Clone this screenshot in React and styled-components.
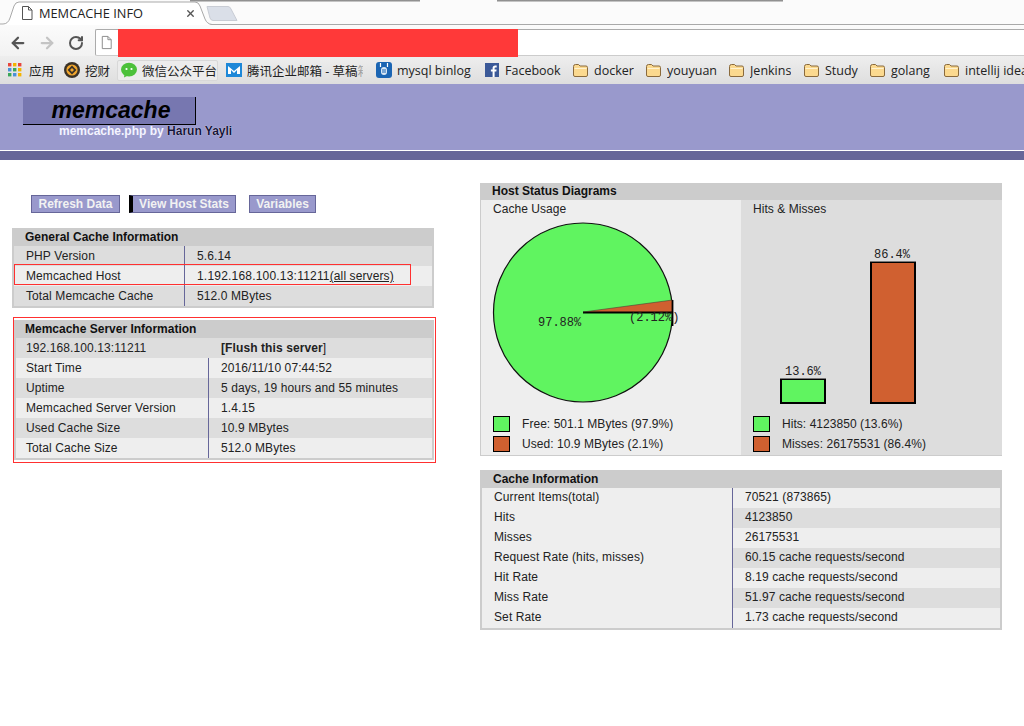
import React from "react";
import styled, { createGlobalStyle } from "styled-components";
import { ArrowLeft, ArrowRight, RotateCw, X } from "lucide-react";

const GlobalStyle = createGlobalStyle`
  html, body {
    margin: 0;
    padding: 0;
    background: #fff;
    overflow: hidden;
  }
  #root {
    width: 1024px;
    height: 726px;
    overflow: hidden;
    font-family: "Liberation Sans", Arial, sans-serif;
  }
`;

const chromeFont = `"Open Sans", "Noto Sans CJK SC", sans-serif`;

const FileIcon = ({ size = 16, color = "#555" }) => (
  <svg width={size} height={size} viewBox="0 0 16 16" fill="#fff" stroke={color} strokeWidth="1">
    <path d="M3.5 1.5h6l3.5 3.5v9.5h-9.500z" />
    <path d="M9.5 1.5v3.5h3.5" fill="none" />
  </svg>
);

const AppsIcon = () => {
  const colors = ["#e8453c", "#f4b400", "#e8453c", "#4a90d9", "#3aa757", "#f4b400", "#3aa757", "#4a90d9", "#f4b400"];
  return (
    <svg width="14" height="14" viewBox="0 0 14 14">
      {colors.map((c, i) => (
        <rect key={i} x={(i % 3) * 5} y={Math.floor(i / 3) * 5} width="3.4" height="3.4" fill={c} />
      ))}
    </svg>
  );
};

const WacaiIcon = () => (
  <svg width="16" height="16" viewBox="0 0 16 16">
    <circle cx="8" cy="8" r="8" fill="#3a3228" />
    <circle cx="8" cy="8" r="5.6" fill="#f2a72e" />
    <path d="M8 3.6 12.4 8 8 12.4 3.6 8z" fill="#3a3228" />
    <path d="M8 6 10 8 8 10 6 8z" fill="#f2a72e" />
  </svg>
);

const WechatIcon = () => (
  <svg width="16" height="16" viewBox="0 0 16 16">
    <ellipse cx="8" cy="7.6" rx="8" ry="6.8" fill="#4cc13a" />
    <path d="M3.5 12 3 15.5 7 13.5z" fill="#4cc13a" />
    <circle cx="5.5" cy="7" r="1.1" fill="#fff" />
    <circle cx="10.5" cy="7" r="1.1" fill="#fff" />
  </svg>
);

const MailIcon = () => (
  <svg width="16" height="14" viewBox="0 0 16 14">
    <rect width="16" height="14" fill="#1e88d8" />
    <path d="M2 3 8 8 14 3v8h-3V7L8 10 5 7v4H2z" fill="#fff" />
  </svg>
);

const MysqlIcon = () => (
  <svg width="16" height="16" viewBox="0 0 16 16">
    <rect width="16" height="16" rx="3" fill="#1b65b3" />
    <path d="M4.5 1v4M11.5 1v4" stroke="#fff" strokeWidth="1.2" />
    <rect x="5" y="5" width="6" height="8" rx="3" fill="#dbe8f4" />
    <path d="M6 8h4M6 10h4" stroke="#1b65b3" />
  </svg>
);

const FacebookIcon = () => (
  <svg width="14" height="14" viewBox="0 0 14 14">
    <rect width="14" height="14" fill="#3b5998" />
    <path d="M9.6 14V8.6h1.7l.3-2H9.6V5.4c0-.6.2-1 1-1h1.1V2.6c-.3 0-.9-.1-1.6-.1-1.500 0-2.500.9-2.500 2.600v1.500H5.900v2h1.700V14z" fill="#fff" />
  </svg>
);

const FolderIcon = () => (
  <svg width="15" height="13" viewBox="0 0 15 13">
    <path d="M.5 2.500q0-2 2-2h3l1.500 1.500h6q1.500 0 1.500 1.500v7.500q0 1.500-1.500 1.500h-11q-1.500 0-1.500-1.500z" fill="#fbd98f" stroke="#8a6a3c" />
    <path d="M1.500 4.500h12" stroke="#fff2cf" />
  </svg>
);

const TabStrip = styled.div`
  position: relative;
  height: 25px;
  background: #fbfbfb;
  border-bottom: 1px solid #a9a9a9;
  box-sizing: border-box;
`;

const WindowShadow = styled.div`
  position: absolute;
  top: 0;
  left: ${(p) => p.$left}px;
  width: ${(p) => p.$width}px;
  height: 2px;
  background: linear-gradient(#777, #ddd);
`;

const TabShape = styled.svg`
  position: absolute;
  left: 0;
  top: 0;
`;

const Tab = styled.div`
  position: absolute;
  left: 19px;
  top: 4px;
  width: 177px;
  height: 18px;
  display: flex;
  align-items: center;
  gap: 4px;
  font: 12.8px ${chromeFont};
  color: #222;
`;

const TabTitle = styled.span`
  flex: 1;
  white-space: nowrap;
`;

const NewTab = styled.svg`
  position: absolute;
  left: 206px;
  top: 5px;
`;

const Toolbar = styled.div`
  height: 31px;
  background: linear-gradient(#fbfbfb, #f2f2f2);
  display: flex;
  align-items: flex-start;
  padding: 4px 0 0 3px;
  box-sizing: border-box;
`;

const NavButton = styled.div`
  width: 29px;
  height: 27px;
  display: flex;
  align-items: center;
  justify-content: center;
  color: ${(p) => (p.$disabled ? "#c4c4c4" : "#555")};
`;

const Omnibox = styled.div`
  flex: 1;
  height: 27px;
  margin-left: 5px;
  background: #fff;
  border: 1px solid #ababab;
  border-right: 0;
  border-bottom-color: #ccc;
  border-radius: 2px 0 0 2px;
  box-sizing: border-box;
  display: flex;
  align-items: center;
  padding-left: 3px;
  gap: 4px;
`;

const Redaction = styled.div`
  width: 400px;
  height: 28px;
  background: #ff3939;
  align-self: flex-start;
  margin-top: -1px;
`;

const BookmarkBar = styled.div`
  height: 28px;
  background: linear-gradient(#eeeeee, #dedede);
  display: flex;
  align-items: center;
  padding-left: 8px;
  overflow: hidden;
`;

const Bookmark = styled.div`
  flex: 0 0 ${(p) => p.$w}px;
  height: 21px;
  display: flex;
  align-items: center;
  gap: ${(p) => p.$gap ?? 5}px;
  position: relative;
  font: 12.5px ${chromeFont};
  color: #222;
  white-space: nowrap;
`;

const HoverBox = styled.div`
  position: absolute;
  left: -4px;
  top: 0;
  width: 101px;
  height: 21px;
  background: #ececec;
  border: 1px solid #d8d8d8;
  border-radius: 2px;
  box-sizing: border-box;
`;

const BookmarkIcon = styled.span`
  position: relative;
  display: flex;
`;

const BookmarkLabel = styled.span`
  position: relative;
  overflow: hidden;
  max-width: ${(p) => p.$max ?? 200}px;
`;

const Faded = styled.span`
  opacity: ${(p) => p.$o};
`;

const Header = styled.div`
  height: 53px;
  padding: 13px 0 0 23px;
  background: #9999cc;
  border-bottom: 1px solid #fff;
`;

const Logo = styled.div`
  width: 168px;
  padding-left: 4px;
  height: 27px;
  background: #7777b0;
  border-right: 1px solid #000;
  border-bottom: 1px solid #000;
  font: italic bold 23px/27px "Liberation Sans", Arial, sans-serif;
  color: #000;
  text-align: center;
`;

const Byline = styled.div`
  margin-left: 36px;
  font: bold 12px/13px "Liberation Sans", Arial, sans-serif;
  color: #f4f4ff;
  white-space: nowrap;
`;

const Author = styled.span`
  color: #15153a;
  text-shadow: 0 0 1px #fff;
`;

const Band = styled.div`
  height: 9px;
  background: #666699;
`;

const Content = styled.div`
  display: flex;
  align-items: flex-start;
  padding-left: 12px;
`;

const LeftColumn = styled.div`
  width: 424px;
  padding-top: 35px;
`;

const RightColumn = styled.div`
  width: 522px;
  margin-left: 44px;
  padding-top: 23px;
`;

const Menu = styled.div`
  display: flex;
  padding-left: 19px;
  height: 18px;
  margin-bottom: 15px;
`;

const MenuButton = styled.div`
  flex: 0 0 auto;
  width: ${(p) => p.$w}px;
  margin-right: ${(p) => p.$gap}px;
  height: 18px;
  box-sizing: border-box;
  background: #9999cc;
  border: 1px solid #666699;
  border-left: ${(p) => (p.$active ? "4px solid #000" : "1px solid #666699")};
  color: #f2f2f2;
  font: bold 12px/16px "Liberation Sans", Arial, sans-serif;
  text-align: center;
  white-space: nowrap;
`;

const InfoBox = styled.div`
  width: ${(p) => p.$w ?? 422}px;
  background: #cccccc;
  padding: 0 2px 2px;
  box-sizing: border-box;
  margin-bottom: ${(p) => p.$mb ?? 0}px;
`;

const BoxTitle = styled.div`
  height: 18px;
  font: bold 12px/18px "Liberation Sans", Arial, sans-serif;
  color: #111;
  padding-left: ${(p) => p.$pad ?? 11}px;
`;

const Row = styled.div`
  display: grid;
  grid-template-columns: ${(p) => p.$split}px 1fr;
  height: 20px;
  font: 12px/${(p) => p.$lh ?? 20}px "Liberation Sans", Arial, sans-serif;
  color: #222;
  letter-spacing: 0.1px;
  position: relative;
`;

const Label = styled.div`
  padding-left: ${(p) => p.$pad ?? 12}px;
  background: ${(p) => (p.$alt ? "#dddddd" : "#eeeeee")};
  white-space: nowrap;
`;

const Value = styled.div`
  padding-left: 12px;
  background: ${(p) => (p.$alt ? "#dddddd" : "#eeeeee")};
  border-left: ${(p) => (p.$plain ? "1px solid transparent" : "1px solid #666699")};
  white-space: nowrap;
`;

const Strong = styled.b`
  font-weight: bold;
`;

const HostAddress = styled.span`
  letter-spacing: 0.2px;
`;

const Link = styled.a`
  color: #222;
  text-decoration: underline;
`;

const HostHighlight = styled.div`
  position: absolute;
  left: 0;
  top: -2px;
  width: 397px;
  height: 21px;
  box-sizing: border-box;
  border: 1px solid #ff3030;
  pointer-events: none;
`;

const ServerFrame = styled.div`
  width: 423px;
  box-sizing: border-box;
  margin-left: 1px;
  padding: 2px 2px 2px 0;
  border: 1px solid #ff3030;
`;

const DiagramBox = styled.div`
  background: #cccccc;
  padding: 0 0 1px 1px;
  margin-bottom: 14px;
  box-sizing: border-box;
`;

const DiagramTitle = styled(BoxTitle)`
  height: 17px;
  line-height: 16px;
`;

const DiagramGrid = styled.div`
  display: grid;
  grid-template-columns: 260px 261px;
  height: 255px;
`;

const DiagramCell = styled.div`
  background: ${(p) => (p.$alt ? "#dddddd" : "#eeeeee")};
  padding-left: 12px;
  font: 12px/18px "Liberation Sans", Arial, sans-serif;
  color: #222;
  letter-spacing: 0.05px;
`;

const CellTitle = styled.div`
  height: 18px;
`;

const ChartSvg = styled.svg`
  display: block;
  margin-left: -12px;
`;

const ChartText = styled.text`
  font: 12px "Liberation Mono", monospace;
  fill: #222;
  letter-spacing: 0;
`;

const LegendRow = styled.div`
  display: flex;
  align-items: center;
  height: 20px;
  gap: 12px;
`;

const Swatch = styled.div`
  width: 17px;
  height: 16px;
  box-sizing: border-box;
  background: ${(p) => p.$color};
  border: 1px solid #000;
`;

const GREEN = "#60f460";
const RED = "#d06030";

const PieChart = () => (
  <ChartSvg width="260" height="196" viewBox="0 0 260 196">
    <g transform="translate(-481 -218)">
      <circle cx="583" cy="312.500" r="89.500" fill={GREEN} stroke="#111" strokeWidth="1.200" />
      <path d="M583 312 L672.500 300 L672.500 312 Z" fill={RED} />
      <path d="M583 312.500 H673" stroke="#000" strokeWidth="1.800" />
      <path d="M672.500 300 V326" stroke="#000" strokeWidth="1.800" />
      <path d="M583 312 L672.500 300" stroke="#333" strokeWidth="0.500" />
      <ChartText x="538" y="326">97.88%</ChartText>
      <ChartText x="629" y="321">(2.12%)</ChartText>
    </g>
  </ChartSvg>
);

const BarChart = () => (
  <ChartSvg width="261" height="196" viewBox="0 0 261 196">
    <g transform="translate(-741 -218)">
      <rect x="781" y="379" width="44" height="24" fill={GREEN} stroke="#000" strokeWidth="2" />
      <rect x="871" y="262" width="44" height="141" fill={RED} stroke="#000" strokeWidth="2" />
      <path d="M780 378.500h46M870 261.500h46" stroke="#777" />
      <ChartText x="785" y="375">13.6%</ChartText>
      <ChartText x="874" y="258">86.4%</ChartText>
    </g>
  </ChartSvg>
);

const generalRows = [
  ["PHP Version", "5.6.14"],
  ["Memcached Host", "host"],
  ["Total Memcache Cache", "512.0 MBytes"],
];

const serverRows = [
  ["Start Time", "2016/11/10 07:44:52"],
  ["Uptime", "5 days, 19 hours and 55 minutes"],
  ["Memcached Server Version", "1.4.15"],
  ["Used Cache Size", "10.9 MBytes"],
  ["Total Cache Size", "512.0 MBytes"],
];

const cacheRows = [
  ["Current Items(total)", "70521 (873865)"],
  ["Hits", "4123850"],
  ["Misses", "26175531"],
  ["Request Rate (hits, misses)", "60.15 cache requests/second"],
  ["Hit Rate", "8.19 cache requests/second"],
  ["Miss Rate", "51.97 cache requests/second"],
  ["Set Rate", "1.73 cache requests/second"],
];

const bookmarks = [
  { w: 56, gap: 7, icon: <AppsIcon />, label: "应用" },
  { w: 57, icon: <WacaiIcon />, label: "挖财" },
  { w: 105, hover: true, icon: <WechatIcon />, label: "微信公众平台" },
  {
    w: 150,
    max: 116,
    icon: <MailIcon />,
    label: (
      <>
        腾讯企业邮箱 - 草稿<Faded $o={0.35}>箱</Faded>
      </>
    ),
  },
  { w: 109, icon: <MysqlIcon />, label: "mysql binlog" },
  { w: 88, gap: 6, icon: <FacebookIcon />, label: "Facebook" },
  { w: 73, gap: 6, icon: <FolderIcon />, label: "docker" },
  { w: 83, gap: 6, icon: <FolderIcon />, label: "youyuan" },
  { w: 75, gap: 6, icon: <FolderIcon />, label: "Jenkins" },
  { w: 66, gap: 6, icon: <FolderIcon />, label: "Study" },
  { w: 74, gap: 6, icon: <FolderIcon />, label: "golang" },
  { w: 90, gap: 6, icon: <FolderIcon />, label: "intellij idea" },
];

const App = () => (
  <>
    <GlobalStyle />
    <TabStrip>
      <WindowShadow $left={190} $width={230} />
      <WindowShadow $left={497} $width={286} />
      <TabShape width="215" height="25" viewBox="0 0 215 25">
        <path
          d="M0 24 H3 Q8 24 10 18 L14 6 Q15.500 2 19 2 H195 Q198.500 2 200 6 L205 19 Q207 24 212 25 H0 Z"
          fill="#fff"
        />
        <path
          d="M0 24 H3 Q8 24 10 18 L14 6 Q15.500 2 19 2 H195 Q198.500 2 200 6 L205 19 Q207 24 212 24.500"
          fill="none"
          stroke="#a9a9a9"
        />
      </TabShape>
      <Tab>
        <FileIcon size={16} />
        <TabTitle>MEMCACHE INFO</TabTitle>
        <X size={11} strokeWidth={3} color="#555" />
      </Tab>
      <NewTab width="32" height="17" viewBox="0 0 32 17">
        <path d="M1 1.500 H22 Q24 1.500 25 4 L31 15.500 H7 Q5 15.500 4 13 Z" fill="#dadfe8" stroke="#c8ccd4" />
      </NewTab>
    </TabStrip>
    <Toolbar>
      <NavButton>
        <ArrowLeft size={18} strokeWidth={3} />
      </NavButton>
      <NavButton $disabled>
        <ArrowRight size={18} strokeWidth={3} />
      </NavButton>
      <NavButton>
        <RotateCw size={16} strokeWidth={3} />
      </NavButton>
      <Omnibox>
        <FileIcon size={15} color="#888" />
        <Redaction />
      </Omnibox>
    </Toolbar>
    <BookmarkBar>
      {bookmarks.map((b, i) => (
        <Bookmark key={i} $w={b.w} $gap={b.gap}>
          {b.hover && <HoverBox />}
          <BookmarkIcon>{b.icon}</BookmarkIcon>
          <BookmarkLabel $max={b.max}>{b.label}</BookmarkLabel>
        </Bookmark>
      ))}
    </BookmarkBar>

    <Header>
      <Logo>memcache</Logo>
      <Byline>
        memcache.php by <Author>Harun Yayli</Author>
      </Byline>
    </Header>
    <Band />

    <Content>
      <LeftColumn>
        <Menu>
          <MenuButton $w={89} $gap={9}>Refresh Data</MenuButton>
          <MenuButton $w={107} $gap={13} $active>View Host Stats</MenuButton>
          <MenuButton $w={67} $gap={0}>Variables</MenuButton>
        </Menu>
        <InfoBox $mb={9}>
          <BoxTitle>General Cache Information</BoxTitle>
          {generalRows.map(([label, value], i) => (
            <Row key={label} $split={170}>
              <Label $alt={i % 2 === 0}>{label}</Label>
              <Value $alt={i % 2 === 0}>
                {value === "host" ? (
                  <>
                    <HostAddress>1.192.168.100.13:11211</HostAddress>
                    <Link>(all servers)</Link>
                  </>
                ) : (
                  value
                )}
              </Value>
              {value === "host" && <HostHighlight />}
            </Row>
          ))}
        </InfoBox>
        <ServerFrame>
          <InfoBox $w={420}>
            <BoxTitle $pad={9}>Memcache Server Information</BoxTitle>
            <Row $split={192}>
              <Label $alt $pad={10}>192.168.100.13:11211</Label>
              <Value $alt $plain>
                <Strong>[Flush this server</Strong>]
              </Value>
            </Row>
            {serverRows.map(([label, value], i) => (
              <Row key={label} $split={192}>
                <Label $alt={i % 2 === 1} $pad={10}>{label}</Label>
                <Value $alt={i % 2 === 1}>{value}</Value>
              </Row>
            ))}
          </InfoBox>
        </ServerFrame>
      </LeftColumn>

      <RightColumn>
        <DiagramBox>
          <DiagramTitle>Host Status Diagrams</DiagramTitle>
          <DiagramGrid>
            <DiagramCell>
              <CellTitle>Cache Usage</CellTitle>
              <PieChart />
              <LegendRow>
                <Swatch $color={GREEN} />
                Free: 501.1 MBytes (97.9%)
              </LegendRow>
              <LegendRow>
                <Swatch $color={RED} />
                Used: 10.9 MBytes (2.1%)
              </LegendRow>
            </DiagramCell>
            <DiagramCell $alt>
              <CellTitle>Hits &amp; Misses</CellTitle>
              <BarChart />
              <LegendRow>
                <Swatch $color={GREEN} />
                Hits: 4123850 (13.6%)
              </LegendRow>
              <LegendRow>
                <Swatch $color={RED} />
                Misses: 26175531 (86.4%)
              </LegendRow>
            </DiagramCell>
          </DiagramGrid>
        </DiagramBox>
        <InfoBox $w={522}>
          <BoxTitle>Cache Information</BoxTitle>
          {cacheRows.map(([label, value], i) => (
            <Row key={label} $split={250} $lh={18}>
              <Label>{label}</Label>
              <Value $alt={i % 2 === 1}>{value}</Value>
            </Row>
          ))}
        </InfoBox>
      </RightColumn>
    </Content>
  </>
);

export default App;
